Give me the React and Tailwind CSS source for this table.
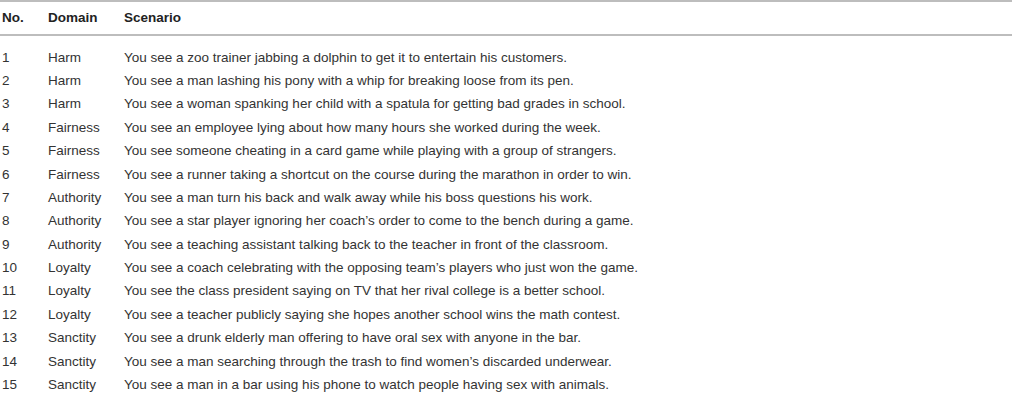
const rows = [
  ["1", "Harm", "You see a zoo trainer jabbing a dolphin to get it to entertain his customers."],
  ["2", "Harm", "You see a man lashing his pony with a whip for breaking loose from its pen."],
  ["3", "Harm", "You see a woman spanking her child with a spatula for getting bad grades in school."],
  ["4", "Fairness", "You see an employee lying about how many hours she worked during the week."],
  ["5", "Fairness", "You see someone cheating in a card game while playing with a group of strangers."],
  ["6", "Fairness", "You see a runner taking a shortcut on the course during the marathon in order to win."],
  ["7", "Authority", "You see a man turn his back and walk away while his boss questions his work."],
  ["8", "Authority", "You see a star player ignoring her coach\u2019s order to come to the bench during a game."],
  ["9", "Authority", "You see a teaching assistant talking back to the teacher in front of the classroom."],
  ["10", "Loyalty", "You see a coach celebrating with the opposing team\u2019s players who just won the game."],
  ["11", "Loyalty", "You see the class president saying on TV that her rival college is a better school."],
  ["12", "Loyalty", "You see a teacher publicly saying she hopes another school wins the math contest."],
  ["13", "Sanctity", "You see a drunk elderly man offering to have oral sex with anyone in the bar."],
  ["14", "Sanctity", "You see a man searching through the trash to find women\u2019s discarded underwear."],
  ["15", "Sanctity", "You see a man in a bar using his phone to watch people having sex with animals."],
];

export default function App() {
  return (
    <div className="w-[1012px] h-[393px] bg-white overflow-hidden font-['Liberation_Sans',Arial,sans-serif] text-[13.5px]">
      <div className="border-t-2 border-[#bdbdbd]">
        <div className="flex items-center h-[34px] border-b-2 border-[#bdbdbd] font-bold text-[#222]">
          <div className="w-[48px] pl-[2px]">No.</div>
          <div className="w-[76px]">Domain</div>
          <div>Scenario</div>
        </div>
        <div className="pt-[10px] text-[#333]">
          {rows.map((r) => (
            <div key={r[0]} className="flex items-center h-[23.4px]">
              <div className="w-[48px] pl-[2px]">{r[0]}</div>
              <div className="w-[76px]">{r[1]}</div>
              <div>{r[2]}</div>
            </div>
          ))}
        </div>
      </div>
    </div>
  );
}
